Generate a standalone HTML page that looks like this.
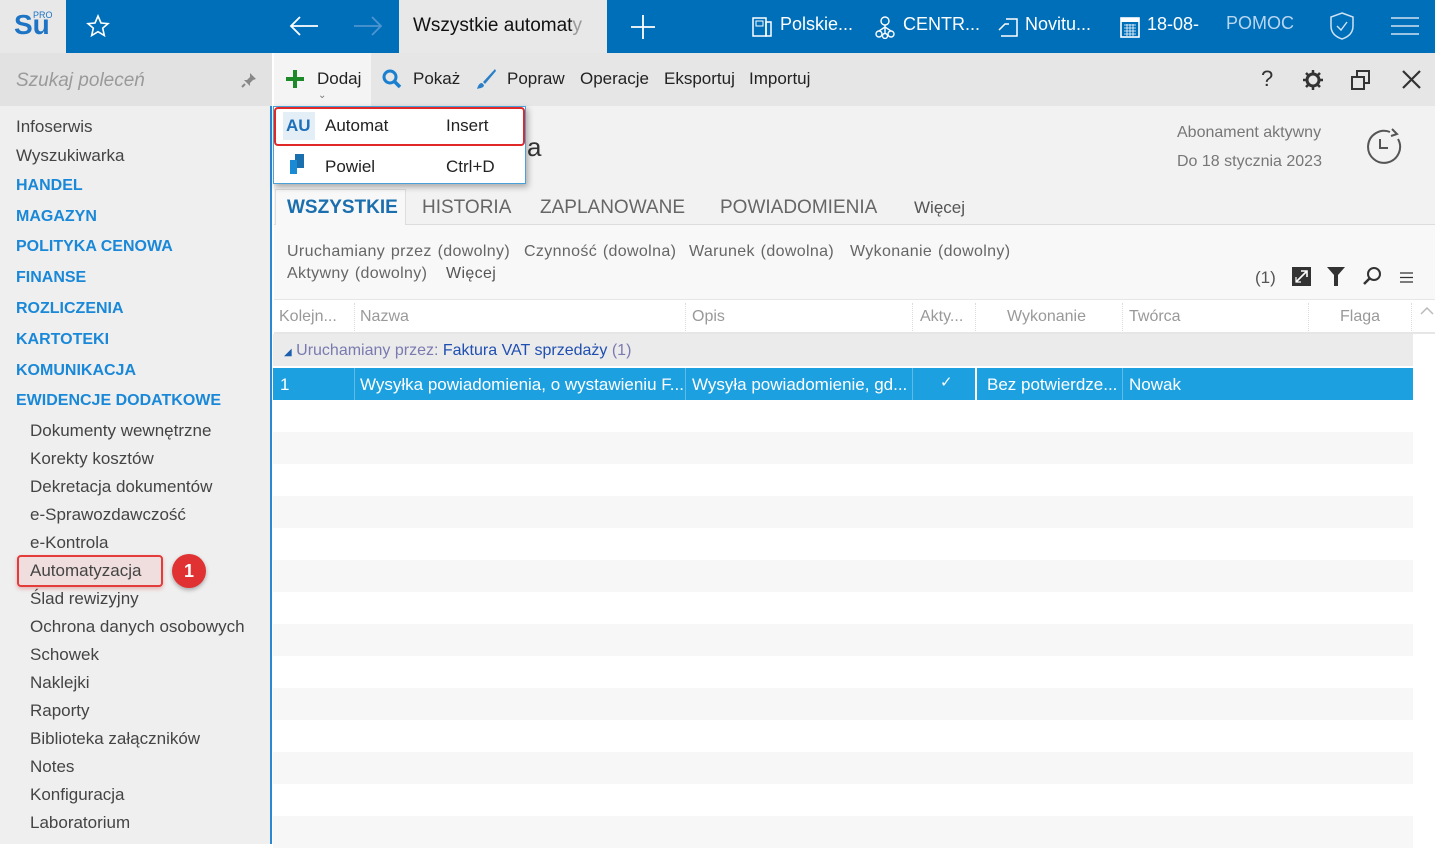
<!DOCTYPE html>
<html><head><meta charset="utf-8"><style>
*{margin:0;padding:0;box-sizing:border-box}
body{width:1435px;height:844px;overflow:hidden;font-family:"Liberation Sans",sans-serif;background:#fff;position:relative;color:#333}
.a{position:absolute;white-space:nowrap}
.top{left:0;top:0;width:1435px;height:53px;background:#006fb9}
.tw{color:#fff;font-size:18px;top:14px}
.side{left:0;top:53px;width:272px;height:791px;background:#efefef;border-right:2px solid #2b87d0}
.sd{font-size:17px;color:#444;left:16px}
.sb{font-size:16px;color:#1a88d8;font-weight:bold;left:16px}
.ss{font-size:17px;color:#444;left:30px}
.tb{font-size:17px;color:#222;top:69px}
.flt{font-size:16px;color:#666;letter-spacing:0.35px;word-spacing:1px}
.hd{font-size:16px;color:#999;top:308px}
.row{left:273px;width:1140px;height:32px}
</style></head><body>
<div class="a top"></div>
<div class="a" style="left:0;top:0;width:66px;height:53px;background:#e8e8e8"></div>
<div class="a" style="left:14px;top:9px;font-size:28px;font-weight:bold;color:#1d74c4">Su</div>
<div class="a" style="left:33px;top:10px;font-size:9px;color:#1d74c4">PRO</div>
<svg class="a" style="left:86px;top:14px" width="24" height="24" viewBox="0 0 24 24"><path d="M12 2l3 7 7 .6-5.3 4.6 1.6 7.3L12 17.7 5.7 21.5l1.6-7.3L2 9.6 9 9z" fill="none" stroke="#fff" stroke-width="1.6"/></svg>
<svg class="a" style="left:288px;top:14px" width="32" height="24" viewBox="0 0 32 24"><path d="M30 12H3M12 3L3 12l9 9" fill="none" stroke="#fff" stroke-width="1.8"/></svg>
<svg class="a" style="left:352px;top:14px" width="32" height="24" viewBox="0 0 32 24"><path d="M2 12h27M20 3l9 9-9 9" fill="none" stroke="#4d95d0" stroke-width="1.8"/></svg>
<div class="a" style="left:399px;top:0;width:208px;height:53px;background:#e8e8e8"></div>
<div class="a" style="left:413px;top:15px;font-size:19px;color:#111">Wszystkie automat<span style="color:#999">y</span></div>
<svg class="a" style="left:630px;top:14px" width="26" height="26"><path d="M13 1v24M1 13h24" stroke="#fff" stroke-width="1.8"/></svg>
<svg class="a" style="left:751px;top:16px" width="22" height="22" viewBox="0 0 22 22"><rect x="2" y="2" width="13" height="18" fill="none" stroke="#fff" stroke-width="1.5"/><rect x="15" y="6" width="5" height="14" fill="none" stroke="#fff" stroke-width="1.5"/><rect x="5" y="5" width="7" height="5" fill="none" stroke="#fff"/></svg>
<div class="a tw" style="left:780px">Polskie...</div>
<svg class="a" style="left:874px;top:15px" width="22" height="24" viewBox="0 0 22 24"><circle cx="11" cy="6" r="4" fill="none" stroke="#fff" stroke-width="1.4"/><circle cx="5" cy="19" r="3" fill="none" stroke="#fff" stroke-width="1.4"/><circle cx="17" cy="19" r="3" fill="none" stroke="#fff" stroke-width="1.4"/><circle cx="11" cy="21" r="2.5" fill="none" stroke="#fff" stroke-width="1.4"/><path d="M11 10v9M5 16l6-4 6 4" fill="none" stroke="#fff" stroke-width="1.4"/></svg>
<div class="a tw" style="left:903px">CENTR...</div>
<svg class="a" style="left:997px;top:16px" width="22" height="22" viewBox="0 0 22 22"><path d="M9 3h11v17H4M2 14l6-6h4" fill="none" stroke="#fff" stroke-width="1.5"/></svg>
<div class="a tw" style="left:1025px">Novitu...</div>
<svg class="a" style="left:1120px;top:16px" width="20" height="22" viewBox="0 0 20 22"><rect x="1" y="2" width="18" height="19" fill="none" stroke="#fff" stroke-width="1.6"/><rect x="1" y="2" width="18" height="4" fill="#fff"/><path d="M4 9h12M4 12h12M4 15h12M4 18h12M7 8v12M10 8v12M13 8v12" stroke="#fff" stroke-width=".8"/></svg>
<div class="a tw" style="left:1147px">18-08-</div>
<div class="a tw" style="left:1226px;color:#b8d6f0;top:13px">POMOC</div>
<svg class="a" style="left:1328px;top:11px" width="28" height="30" viewBox="0 0 28 30"><path d="M14 2l11 4v9c0 7-5 11-11 13C8 26 3 22 3 15V6z" fill="none" stroke="#cfe2f3" stroke-width="1.5"/><path d="M9 15l4 4 6-8" fill="none" stroke="#cfe2f3" stroke-width="1.4"/></svg>
<svg class="a" style="left:1391px;top:16px" width="28" height="20"><path d="M0 2h28M0 10h28M0 18h28" stroke="#cfe2f3" stroke-width="1.6"/></svg>

<div class="a side"></div>
<div class="a" style="left:0;top:53px;width:272px;height:53px;background:#e2e2e2"></div>
<div class="a" style="left:16px;top:70px;font-size:19px;color:#9a9a9a;font-style:italic">Szukaj poleceń</div>
<svg class="a" style="left:240px;top:71px" width="18" height="18" viewBox="0 0 18 18"><path d="M10 2l6 6-3 1-3 3 0 3-6-6 3 0 3-3z" fill="#888"/><path d="M5 13l-3 3" stroke="#888" stroke-width="2"/></svg>
<div class="a sd" style="top:117px">Infoserwis</div>
<div class="a sd" style="top:146px">Wyszukiwarka</div>
<div class="a sb" style="top:177px">HANDEL</div>
<div class="a sb" style="top:208px">MAGAZYN</div>
<div class="a sb" style="top:238px">POLITYKA CENOWA</div>
<div class="a sb" style="top:269px">FINANSE</div>
<div class="a sb" style="top:300px">ROZLICZENIA</div>
<div class="a sb" style="top:331px">KARTOTEKI</div>
<div class="a sb" style="top:362px">KOMUNIKACJA</div>
<div class="a sb" style="top:392px">EWIDENCJE DODATKOWE</div>
<div class="a ss" style="top:421px">Dokumenty wewnętrzne</div>
<div class="a ss" style="top:449px">Korekty kosztów</div>
<div class="a ss" style="top:477px">Dekretacja dokumentów</div>
<div class="a ss" style="top:505px">e-Sprawozdawczość</div>
<div class="a ss" style="top:533px">e-Kontrola</div>
<div class="a" style="left:17px;top:555px;width:146px;height:32px;border:2px solid #e43b3b;border-radius:4px;background:#f0dede;box-shadow:0 2px 4px rgba(200,0,0,.25)"></div>
<div class="a ss" style="top:561px">Automatyzacja</div>
<div class="a" style="left:172px;top:554px;width:34px;height:34px;border-radius:50%;background:#e03232;color:#fff;font-size:18px;font-weight:bold;text-align:center;line-height:34px;box-shadow:0 2px 4px rgba(0,0,0,.3)">1</div>
<div class="a ss" style="top:589px">Ślad rewizyjny</div>
<div class="a ss" style="top:617px">Ochrona danych osobowych</div>
<div class="a ss" style="top:645px">Schowek</div>
<div class="a ss" style="top:673px">Naklejki</div>
<div class="a ss" style="top:701px">Raporty</div>
<div class="a ss" style="top:729px">Biblioteka załączników</div>
<div class="a ss" style="top:757px">Notes</div>
<div class="a ss" style="top:785px">Konfiguracja</div>
<div class="a ss" style="top:813px">Laboratorium</div>

<div class="a" style="left:274px;top:53px;width:1161px;height:53px;background:#e6e6e6"></div>
<div class="a" style="left:274px;top:53px;width:97px;height:53px;background:#f4f4f4"></div>
<svg class="a" style="left:286px;top:70px" width="18" height="18"><path d="M9 0v18M0 9h18" stroke="#1d8a2a" stroke-width="4"/></svg>
<div class="a tb" style="left:317px">Dodaj</div>
<div class="a" style="left:318px;top:90px;font-size:10px;color:#777">⌄</div>
<svg class="a" style="left:382px;top:69px" width="20" height="20"><circle cx="8" cy="8" r="6" fill="none" stroke="#1b7fd0" stroke-width="3"/><path d="M12 12l6 6" stroke="#1b7fd0" stroke-width="3.5"/></svg>
<div class="a tb" style="left:413px">Pokaż</div>
<svg class="a" style="left:475px;top:68px" width="22" height="22" viewBox="0 0 22 22"><path d="M20 1L8 14l2 2L21 3z" fill="#2b7fc7"/><path d="M7 15c-3 0-4 3-5 6 3-1 7-1 7-4z" fill="#2b7fc7"/></svg>
<div class="a tb" style="left:507px">Popraw</div>
<div class="a tb" style="left:580px">Operacje</div>
<div class="a tb" style="left:664px">Eksportuj</div>
<div class="a tb" style="left:749px">Importuj</div>
<div class="a" style="left:1261px;top:66px;font-size:22px;color:#333">?</div>
<svg class="a" style="left:1302px;top:69px" width="22" height="22" viewBox="0 0 22 22"><circle cx="11" cy="11" r="6" fill="none" stroke="#333" stroke-width="3"/><path d="M11 1v4M11 17v4M1 11h4M17 11h4M4 4l3 3M15 15l3 3M4 18l3-3M15 7l3-3" stroke="#333" stroke-width="2.5"/></svg>
<svg class="a" style="left:1350px;top:69px" width="22" height="22"><rect x="7" y="2" width="12" height="12" fill="none" stroke="#333" stroke-width="2"/><rect x="2" y="8" width="12" height="12" fill="#e6e6e6" stroke="#333" stroke-width="2"/></svg>
<svg class="a" style="left:1402px;top:70px" width="19" height="19"><path d="M1 1l17 17M18 1L1 18" stroke="#333" stroke-width="2.2"/></svg>

<div class="a" style="left:274px;top:106px;width:1161px;height:120px;background:#f2f2f2"></div>
<div class="a" style="left:527px;top:132px;font-size:26px;color:#333">a</div>
<div class="a" style="left:1177px;top:124px;font-size:16px;color:#777">Abonament aktywny</div>
<div class="a" style="left:1177px;top:153px;font-size:16px;color:#777">Do 18 stycznia 2023</div>
<svg class="a" style="left:1362px;top:126px" width="42" height="42" viewBox="0 0 42 42"><path d="M36 13A16 16 0 1 1 28 6" fill="none" stroke="#555" stroke-width="2"/><path d="M30 3l5 5-6 2" fill="none" stroke="#555" stroke-width="2"/><path d="M18 13v9h8" fill="none" stroke="#555" stroke-width="2"/></svg>
<div class="a" style="left:274px;top:224px;width:1161px;height:1px;background:#ddd"></div>
<div class="a" style="left:275px;top:189px;width:131px;height:36px;background:#f8f8f8;border:1px solid #ddd;border-bottom:none"></div>
<div class="a" style="left:287px;top:197px;font-size:19px;font-weight:bold;color:#1b6fae">WSZYSTKIE</div>
<div class="a" style="left:422px;top:197px;font-size:19px;color:#666">HISTORIA</div>
<div class="a" style="left:540px;top:197px;font-size:19px;color:#666">ZAPLANOWANE</div>
<div class="a" style="left:720px;top:197px;font-size:19px;color:#666">POWIADOMIENIA</div>
<div class="a" style="left:914px;top:198px;font-size:17px;color:#555">Więcej</div>
<div class="a" style="left:274px;top:225px;width:1161px;height:74px;background:#f8f8f8"></div>
<div class="a flt" style="left:287px;top:243px">Uruchamiany przez (dowolny)</div>
<div class="a flt" style="left:524px;top:243px">Czynność (dowolna)</div>
<div class="a flt" style="left:689px;top:243px">Warunek (dowolna)</div>
<div class="a flt" style="left:850px;top:243px">Wykonanie (dowolny)</div>
<div class="a flt" style="left:287px;top:265px">Aktywny (dowolny)</div>
<div class="a flt" style="left:446px;top:265px;color:#555">Więcej</div>
<div class="a" style="left:1255px;top:268px;font-size:17px;color:#555">(1)</div>
<svg class="a" style="left:1292px;top:267px" width="19" height="19"><rect width="19" height="19" fill="#333"/><path d="M4 15L15 4M9 4h6v6" stroke="#fff" stroke-width="1.6" fill="none"/><path d="M4 10v5h5" stroke="#fff" stroke-width="1.2" fill="none"/></svg>
<svg class="a" style="left:1327px;top:267px" width="18" height="19"><path d="M0 0h18L11 8v11H7V8z" fill="#333"/></svg>
<svg class="a" style="left:1362px;top:266px" width="20" height="20"><circle cx="12" cy="8" r="6" fill="none" stroke="#333" stroke-width="2"/><path d="M8 12l-6 6" stroke="#333" stroke-width="2.5"/></svg>
<svg class="a" style="left:1400px;top:272px" width="13" height="11"><path d="M0 1h13M0 5.5h13M0 10h13" stroke="#333" stroke-width="1.3"/></svg>

<div class="a" style="left:274px;top:299px;width:1161px;height:35px;background:#fff;border-top:1px solid #e6e6e6;border-bottom:2px solid #e6e6e6"></div>
<div class="a hd" style="left:279px">Kolejn...</div>
<div class="a hd" style="left:360px">Nazwa</div>
<div class="a hd" style="left:692px">Opis</div>
<div class="a hd" style="left:920px">Akty...</div>
<div class="a hd" style="left:1007px">Wykonanie</div>
<div class="a hd" style="left:1129px">Twórca</div>
<div class="a hd" style="left:1340px">Flaga</div>
<div class="a" style="left:354px;top:303px;height:28px;border-left:1px dotted #ddd"></div>
<div class="a" style="left:685px;top:303px;height:28px;border-left:1px dotted #ddd"></div>
<div class="a" style="left:912px;top:303px;height:28px;border-left:1px dotted #ddd"></div>
<div class="a" style="left:975px;top:303px;height:28px;border-left:1px dotted #ddd"></div>
<div class="a" style="left:1122px;top:303px;height:28px;border-left:1px dotted #ddd"></div>
<div class="a" style="left:1308px;top:303px;height:28px;border-left:1px dotted #ddd"></div>
<div class="a" style="left:1411px;top:303px;height:28px;border-left:1px dotted #ddd"></div>
<svg class="a" style="left:1420px;top:307px" width="14" height="8"><path d="M1 7l6-6 6 6" fill="none" stroke="#bbb" stroke-width="1.5"/></svg>

<div class="a row" style="top:334px;background:#ebebeb"></div>
<div class="a" style="left:284px;top:342px;font-size:16px;color:#7a7ab0"><span style="font-size:10px;color:#1b5fae">◢</span> Uruchamiany przez: <span style="color:#1f4fb0">Faktura VAT sprzedaży</span> (1)</div>
<div class="a row" style="top:368px;background:#1ca0e0"></div>
<div class="a" style="left:354px;top:368px;height:32px;border-left:1px solid #5dbbe8"></div>
<div class="a" style="left:685px;top:368px;height:32px;border-left:1px solid #5dbbe8"></div>
<div class="a" style="left:912px;top:368px;height:32px;border-left:1px solid #5dbbe8"></div>
<div class="a" style="left:975px;top:368px;height:32px;border-left:2px solid #fff"></div>
<div class="a" style="left:1122px;top:368px;height:32px;border-left:1px solid #5dbbe8"></div>
<div class="a" style="color:#fff;font-size:17px;top:375px;left:280px">1</div>
<div class="a" style="color:#fff;font-size:17px;top:375px;left:360px">Wysyłka powiadomienia, o wystawieniu F...</div>
<div class="a" style="color:#fff;font-size:17px;top:375px;left:692px">Wysyła powiadomienie, gd...</div>
<div class="a" style="color:#fff;font-size:15px;top:373px;left:940px">✓</div>
<div class="a" style="color:#fff;font-size:17px;top:375px;left:987px">Bez potwierdze...</div>
<div class="a" style="color:#fff;font-size:17px;top:375px;left:1129px">Nowak</div>
<div class="a row" style="top:432px;background:#f7f7f7"></div>
<div class="a row" style="top:496px;background:#f7f7f7"></div>
<div class="a row" style="top:560px;background:#f7f7f7"></div>
<div class="a row" style="top:624px;background:#f7f7f7"></div>
<div class="a row" style="top:688px;background:#f7f7f7"></div>
<div class="a row" style="top:752px;background:#f7f7f7"></div>
<div class="a row" style="top:816px;background:#f7f7f7"></div>

<div class="a" style="left:273px;top:106px;width:253px;height:78px;background:#fff;border:1px solid #4aa0d8;box-shadow:2px 3px 6px rgba(0,0,0,.3)"></div>
<div class="a" style="left:283px;top:112px;width:32px;height:28px;background:#e4eef7"></div>
<div class="a" style="left:286px;top:116px;font-size:17px;font-weight:bold;color:#1d6fb8">AU</div>
<div class="a" style="left:325px;top:116px;font-size:17px;color:#222">Automat</div>
<div class="a" style="left:446px;top:116px;font-size:17px;color:#222">Insert</div>
<div class="a" style="left:274px;top:107px;width:251px;height:39px;border:2px solid #e02828;border-radius:4px"></div>
<svg class="a" style="left:288px;top:154px" width="18" height="20"><rect x="7" y="0" width="9" height="14" fill="#1a6faf"/><rect x="2" y="6" width="7" height="14" fill="#1a8ad4"/></svg>
<div class="a" style="left:325px;top:157px;font-size:17px;color:#222">Powiel</div>
<div class="a" style="left:446px;top:157px;font-size:17px;color:#222">Ctrl+D</div>
</body></html>
